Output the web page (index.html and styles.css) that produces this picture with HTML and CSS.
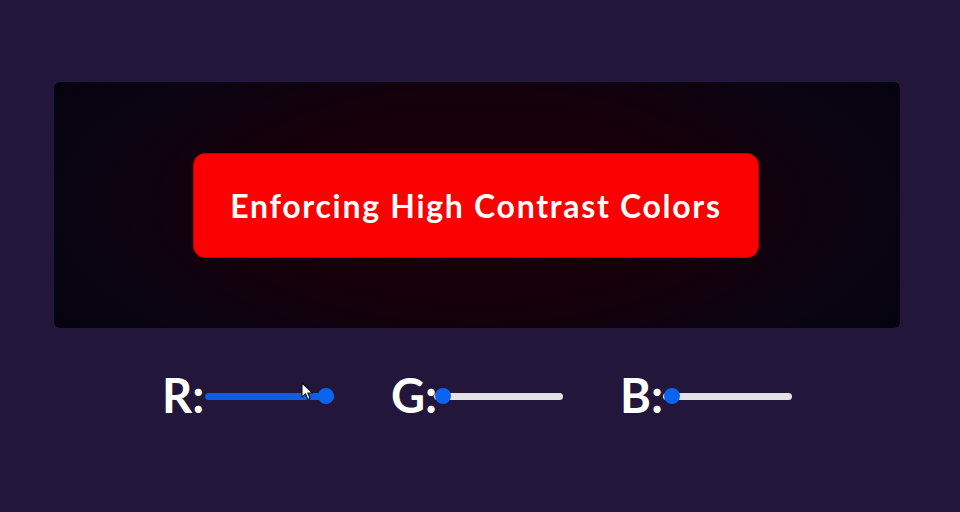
FILE: index.html
```html
<!DOCTYPE html>
<html>
<head>
<meta charset="utf-8">
<link rel="stylesheet" href="styles.css">
</head>
<body>
<main class="page">
  <section class="stage">
    <button class="cta">Enforcing High Contrast Colors</button>
  </section>
  <div class="controls">
    <div class="ctrl">
      <span class="lbl">R:</span>
      <div class="track full">
        <span class="thumb end"></span>
        <svg class="cursor" width="13" height="19" viewBox="0 0 13 19"><path d="M1 1 L1 15 L4.5 11.8 L7 17.5 L9.2 16.5 L6.8 11 L11.5 11 Z" fill="#fff" stroke="#111" stroke-width="1.1" stroke-linejoin="round"/></svg>
      </div>
    </div>
    <div class="ctrl">
      <span class="lbl">G:</span>
      <div class="track">
        <span class="thumb"></span>
      </div>
    </div>
    <div class="ctrl">
      <span class="lbl">B:</span>
      <div class="track">
        <span class="thumb"></span>
      </div>
    </div>
  </div>
</main>
</body>
</html>
```
FILE: styles.css
```css
html, body {
  margin: 0;
  padding: 0;
  background: #22163a;
  width: 960px;
  height: 512px;
  overflow: hidden;
  font-family: Lato, "Open Sans", sans-serif;
}
.page {
  padding-top: 82px;
  padding-left: 54px;
}
.stage {
  width: 846px;
  height: 246px;
  border-radius: 6px;
  background: radial-gradient(ellipse 60% 90% at 50% 50%, #1c0008 0%, #150009 45%, #0a0413 80%, #05030f 100%);
  display: flex;
  align-items: center;
  justify-content: center;
}
.cta {
  width: 566px;
  height: 105px;
  margin-left: -2px;
  border: 1px solid #c00000;
  border-radius: 12px;
  background: #fa0000;
  color: #fff;
  font-family: Lato, "Open Sans", sans-serif;
  font-weight: 700;
  font-size: 32px;
  letter-spacing: 1.7px;
  cursor: pointer;
  padding: 0;
}
.controls {
  display: flex;
  align-items: center;
  gap: 57px;
  margin-top: 40px;
  margin-left: 108px;
  height: 54px;
}
.ctrl {
  display: flex;
  align-items: center;
}
.lbl {
  color: #fff;
  font-weight: 700;
  font-size: 47px;
  line-height: 54px;
  width: 43px;
}
.track {
  position: relative;
  width: 129px;
  height: 7px;
  border-radius: 4px;
  background: #e2e1e4;
  margin-top: 2px;
}
.track.full {
  background: #0b5fe6;
}
.thumb {
  position: absolute;
  left: 1px;
  top: -4.5px;
  width: 16px;
  height: 16px;
  border-radius: 50%;
  background: #0a64f0;
}
.thumb.end {
  left: auto;
  right: 0;
}
.cursor {
  position: absolute;
  left: 96px;
  top: -11px;
}
```
